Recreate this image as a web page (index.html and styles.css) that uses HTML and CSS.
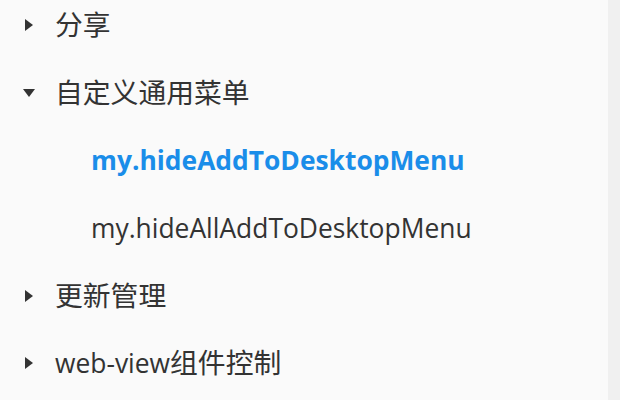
FILE: index.html
```html
<!DOCTYPE html>
<html lang="zh-CN">
<head>
    <meta charset="UTF-8">
    <title>菜单</title>
    <link rel="stylesheet" href="styles.css">
</head>
<body>
    <div class="page">
        <ul class="menu">
            <li class="menu-item">
                <span class="caret"></span>
                <span class="label cjk">分享</span>
            </li>
            <li class="menu-item open">
                <span class="caret"></span>
                <span class="label cjk">自定义通用菜单</span>
            </li>
            <li class="sub-item active">my.hideAddToDesktopMenu</li>
            <li class="sub-item">my.hideAllAddToDesktopMenu</li>
            <li class="menu-item">
                <span class="caret"></span>
                <span class="label cjk">更新管理</span>
            </li>
            <li class="menu-item">
                <span class="caret"></span>
                <span class="label">web-view<span class="cjk">组件控制</span></span>
            </li>
        </ul>
        <div class="scroll-track"></div>
    </div>
</body>
</html>
```

FILE: styles.css
```css
html, body {
    margin: 0;
    height: 100%;
}

body {
    font-family: "Open Sans", "Noto Sans CJK SC", sans-serif;
    background-color: #fafafa;
    color: #333;
    font-size: 26.4px;
}

.page {
    display: flex;
    height: 100%;
    overflow: hidden;
}

.menu {
    flex: 1;
    list-style: none;
    margin: 0;
    padding: 0;
    margin-top: -9px;
}

.menu-item,
.sub-item {
    height: 67.7px;
    display: flex;
    align-items: center;
}

.menu-item {
    padding-left: 25px;
}

.label {
    line-height: 1;
}

/* 中文字比英文略大 */
.cjk {
    font-size: 27.8px;
}

.caret {
    width: 0;
    height: 0;
    border-top: 6px solid transparent;
    border-bottom: 6px solid transparent;
    border-left: 8px solid #333;
    margin-right: 22px;
}

.menu-item.open .caret {
    border-left: 6px solid transparent;
    border-right: 6px solid transparent;
    border-top: 8px solid #333;
    border-bottom: 0;
    margin-left: -2px;
    margin-right: 20px;
}

.sub-item {
    padding-left: 91px;
}

.sub-item.active {
    color: #1a8de9;
    font-weight: bold;
}

/* 右側捲軸軌道 */
.scroll-track {
    width: 12px;
    background-color: #f0f0f0;
}
```
